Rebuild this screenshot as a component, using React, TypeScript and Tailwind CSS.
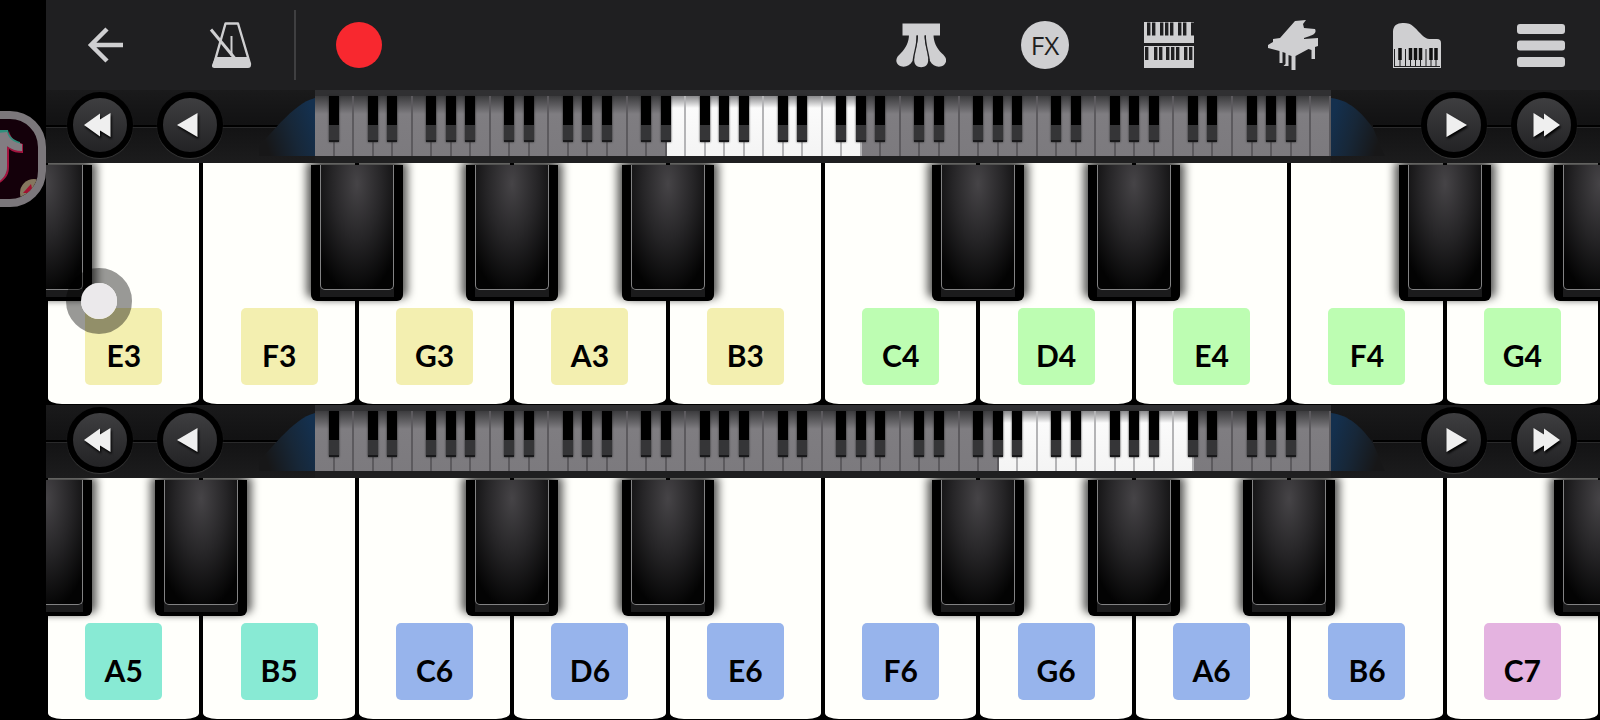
import type { ReactNode } from 'react';
import clsx from 'clsx';

interface Note {
  name: string;
  // black key sitting on the left edge of this white key
  sharp: boolean;
}

interface KeyboardProps {
  id: string;
  notes: Note[];
  firstVisible: number;
}

const LETTERS = ['A', 'B', 'C', 'D', 'E', 'F', 'G'];
const NO_SHARP_BEFORE = ['C', 'F'];

const LABEL_COLORS: Record<string, string> = {
  '3': 'bg-[#f3efb0]',
  '4': 'bg-[#bdfdb2]',
  '5': 'bg-[#88ead4]',
  '6': 'bg-[#97b4ec]',
  '7': 'bg-[#e4b3e0]',
};

const toNotes = (names: string[]): Note[] =>
  names.map((name) => ({ name, sharp: !NO_SHARP_BEFORE.includes(name[0]) }));

const UPPER = toNotes(['E3', 'F3', 'G3', 'A3', 'B3', 'C4', 'D4', 'E4', 'F4', 'G4']);
const LOWER = toNotes(['A5', 'B5', 'C6', 'D6', 'E6', 'F6', 'G6', 'A6', 'B6', 'C7']);

function ToolButton({ label, children }: { label: string; children: ReactNode }) {
  return (
    <button type="button" aria-label={label} className="size-[50px] flex-none text-[#cfcfd1]">
      {children}
    </button>
  );
}

function MiniBlacks({ xs, y }: { xs: number[]; y: number }) {
  return (
    <>
      {xs.map((x) => (
        <rect key={x} x={x} y={y} width="3.4" height="13" fill="#1f1f21" />
      ))}
    </>
  );
}

function Toolbar() {
  return (
    <header className="flex h-[90px] items-center justify-between bg-[#1f1f21] px-[34px]">
      <div className="flex items-center">
        <ToolButton label="Back">
          <svg viewBox="0 0 50 50" fill="none" stroke="currentColor" strokeWidth="4.5">
            <path d="M43 25H11M27 9L11 25l16 16" />
          </svg>
        </ToolButton>
        <div className="w-[76px]" />
        <ToolButton label="Metronome">
          <svg viewBox="0 0 50 50" fill="none" stroke="currentColor" strokeWidth="2.4">
            <path d="M19.500 3.500h12.500l12 40.500H8z" strokeLinejoin="round" />
            <path d="M9.500 37h33l2.500 8q0 3-3 3H8.500q-3 0-2.500-3z" fill="currentColor" stroke="none" />
            <path d="M25.500 16v20" strokeWidth="2" />
            <path d="M5 9.500L28.500 38" strokeWidth="3" />
          </svg>
        </ToolButton>
        <div className="w-[38px]" />
        <div className="h-[70px] w-[2px] bg-[#3f3f41]" />
        <div className="w-[38px]" />
        <ToolButton label="Record">
          <svg viewBox="0 0 50 50">
            <circle cx="25" cy="25" r="23" fill="#f8282f" />
          </svg>
        </ToolButton>
      </div>
      <div className="flex items-center gap-[74px]">
        <ToolButton label="Pedals">
          <svg viewBox="0 0 50 50" fill="currentColor">
            <path d="M6.500 3.500h37.500v12H6.500z" />
            <path d="M13 14h7.500c0 10 0 20-4 27-3 6-10 7-14 4-4-4-2-8 2-11.500C10 28 13 22 13 14z" />
            <path d="M37.500 14H30c0 10 0 20 4 27 3 6 10 7 14 4 4-4 2-8-2-11.500C40.500 28 37.500 22 37.500 14z" />
            <path d="M22 14h6.500c0 10 3.700 18 3.700 26 0 5-3 7.200-7 7.200s-7-2.200-7-7.200c0-8 3.800-16 3.800-26z" />
            <path
              d="M21.200 15.500c.3 9-3 16-4 25M29.300 15.500c-.3 9 3 16 4 25"
              fill="none"
              stroke="#1f1f21"
              strokeWidth="1.300"
            />
          </svg>
        </ToolButton>
        <ToolButton label="Effects">
          <span className="mx-auto flex size-12 items-center justify-center rounded-full bg-[#cfcfd1] font-['Open_Sans'] text-[26px] text-[#1f1f21]">
            FX
          </span>
        </ToolButton>
        <ToolButton label="Keyboard layout">
          <svg viewBox="0 0 50 50" fill="currentColor">
            <path d="M0 2h50v21H0zM0 26h50v22H0z" />
            <MiniBlacks xs={[3, 8, 16, 21, 26, 34, 39, 47]} y={2.5} />
            <MiniBlacks xs={[1, 10, 15, 22, 27, 32, 40, 45]} y={27} />
          </svg>
        </ToolButton>
        <ToolButton label="Instrument">
          <svg viewBox="0 0 50 50" fill="currentColor">
            <path d="M27 1l11-1-3 4 1 4 11 1c2 4-2 6-5 7l-6 2v1l14-1v8l-3 1v12h-3.500V30l-3-1-13 7v14h-4V36l-3-1v11h-5l2-2V33l-3-1v11h-3V31L0 28v-3l5-3v-3l7-1z" />
          </svg>
        </ToolButton>
        <ToolButton label="Piano">
          <svg viewBox="0 0 50 50" fill="currentColor">
            <path d="M1 48V12C1 5 6 2.500 12 3c8 0 11 5 16 10 4 4 6 6 11 6h6q4 0 4 4v25z" />
            <path
              d="M2.500 29v17.500M8 40v6M13.500 29v17M18.500 40v6M23.500 40v6M28.500 40v6M34 29v17M39 40v6M44 40v6M2 46.500h46"
              stroke="#1f1f21"
              strokeWidth="1"
            />
            <path d="M8 28v12M18.500 28v12M23.500 28v12M28.500 28v12M39 28v12M44 28v12" stroke="#111" strokeWidth="3.500" />
          </svg>
        </ToolButton>
        <ToolButton label="Menu">
          <svg viewBox="0 0 50 50" fill="currentColor">
            <rect x="1" y="4" width="48" height="10" rx="3" />
            <rect x="1" y="20.500" width="48" height="10" rx="3" />
            <rect x="1" y="37" width="48" height="10" rx="3" />
          </svg>
        </ToolButton>
      </div>
    </header>
  );
}

function RoundButton({ label, double, flip }: { label: string; double?: boolean; flip?: boolean }) {
  return (
    <button
      type="button"
      aria-label={label}
      className="size-[66px] rounded-full border-[6px] border-black bg-linear-to-b from-[#3e3e40] to-[#232325] shadow-[0_1px_1px_#3a3a3a]"
    >
      <svg viewBox="0 0 54 54" className="size-full drop-shadow-[1px_2px_1px_#000]">
        <g transform={flip ? 'translate(54 0) scale(-1 1)' : undefined}>
          {double ? (
            <path d="M11 27L27 15.500v6L37.500 15v24L27 32.500v6z" fill="#efefef" />
          ) : (
            <path d="M14 27l20.500-12v24z" fill="#efefef" />
          )}
        </g>
      </svg>
    </button>
  );
}

// the 52 white keys from A0 to C8, with the keys on screen lit up
function Overview({ firstVisible }: { firstVisible: number }) {
  const keys = Array.from({ length: 52 }, (_, i) => LETTERS[i % 7]);
  return (
    <div className="flex h-[73px] flex-1 flex-col border-b-[7px] border-[#1f1f20] bg-[#303032] pt-[6px]">
      <div className="flex flex-1">
        {keys.map((letter, i) => {
          const lit = i >= firstVisible && i < firstVisible + 10;
          return (
            <div
              key={i}
              className={clsx(
                'relative flex-1 border-r-2 bg-linear-to-b',
                lit
                  ? 'border-[#b4b4b6] from-[#8a8a8c] via-[#fbfbfb] via-20% to-[#f4f4f4]'
                  : 'border-[#5c5a5e] from-[#3c3c3e] via-[#7f7d81] via-30% to-[#7c7a7e]'
              )}
            >
              {i > 0 && !NO_SHARP_BEFORE.includes(letter) && (
                <span className="absolute -left-[6px] top-0 z-10 h-[46px] w-[10px] border-b-2 border-[#18181a] bg-linear-to-b from-black from-65% to-[#353537] to-65% shadow-[0_0_2px_#222]" />
              )}
            </div>
          );
        })}
      </div>
    </div>
  );
}

function SideRail({ id, right }: { id: string; right?: boolean }) {
  return (
    <div className={clsx('relative w-[269px] flex-none', right && 'flex justify-end')}>
      <div
        className={clsx(
          'absolute top-[35px] h-[3px] border-b border-[#2a2a2b] bg-black',
          right ? 'left-[42px] right-0' : 'left-0 right-[37px]'
        )}
      />
      <svg viewBox="0 0 60 66" className={clsx('absolute top-0 h-[66px] w-[60px]', right ? 'left-0' : 'right-0')}>
        <defs>
          <linearGradient id={id} x1="1" x2="0.100" y1="0.400" y2="0.700">
            <stop offset="0" stopColor="#14304e" />
            <stop offset="0.450" stopColor="#172738" />
            <stop offset="1" stopColor="#171718" />
          </linearGradient>
        </defs>
        <g transform={right ? 'translate(60 0) scale(-1 1)' : undefined}>
          {right ? (
            <path d="M60 8C42 10 30 22 18 38L6 66h54z" fill={`url(#${id})`} />
          ) : (
            <path d="M60 8C48 11 38 20 26 32L4 56v10h56z" fill={`url(#${id})`} />
          )}
        </g>
      </svg>
      <div className={clsx('relative flex h-[68px] items-center gap-6 pt-[2px]', right ? 'pr-[23px]' : 'pl-[21px]')}>
        {right ? (
          <>
            <RoundButton label="Next key" flip />
            <RoundButton label="Next octave" double flip />
          </>
        ) : (
          <>
            <RoundButton label="Previous octave" double />
            <RoundButton label="Previous key" />
          </>
        )}
      </div>
    </div>
  );
}

function BlackKey({ side }: { side: 'left' | 'right' }) {
  return (
    <button
      type="button"
      aria-label="Black key"
      className={clsx(
        'absolute top-[2px] z-10 h-[136px] w-[92px] rounded-b-md border-x-[9px] border-t-0 border-b-4 border-black bg-[#1b1b1c] pb-[7px] shadow-[5px_-3px_8px_rgba(0,0,0,0.6),-5px_-3px_8px_rgba(0,0,0,0.6)]',
        side === 'left' ? '-left-[46px]' : '-right-[46px]'
      )}
    >
      <span className="block h-full rounded-b-[5px] border border-t-0 border-[#828283] bg-[radial-gradient(ellipse_70%_90%_at_50%_15%,#464447_0%,#262527_50%,#030303_100%)]" />
    </button>
  );
}

function Keyboard({ id, notes, firstVisible }: KeyboardProps) {
  return (
    <section>
      <div className="flex h-[73px] bg-linear-to-b from-[#1a1a1b] via-[#121213] via-45% to-[#1c1c1d]">
        <SideRail id={`${id}-left`} />
        <Overview firstVisible={firstVisible} />
        <SideRail id={`${id}-right`} right />
      </div>
      <div className="flex h-[242px] overflow-hidden bg-black">
        {notes.map((note, i) => (
          <div key={note.name} className="relative flex-1 px-[2px] pb-px">
            <button
              type="button"
              className="flex h-full w-full flex-col items-center justify-end bg-[#fffffb] pb-[19px] [border-radius:0_0_14px_14px/0_0_6px_6px]"
            >
              <span
                className={clsx(
                  'flex size-[77px] items-center justify-center rounded-[5px] pt-[18px] text-[30px] font-bold text-black',
                  LABEL_COLORS[note.name[1]]
                )}
              >
                {note.name}
              </span>
            </button>
            {note.sharp && <BlackKey side="left" />}
            {i === notes.length - 1 && <BlackKey side="right" />}
          </div>
        ))}
      </div>
    </section>
  );
}

function FloatingApp() {
  return (
    <div className="absolute -left-[50px] top-[111px] h-24 w-24 overflow-hidden rounded-[36px] border-8 border-[#7b777b] bg-[#14000a]">
      <svg viewBox="0 0 80 80" className="size-full">
        <path d="M51 12c2 8 7 11 14 13v9c-6 0-10-1-14-4v18c0 9-5 15-16 19z" fill="#a31540" />
        <path d="M40 11h10c1 7 6 10 12 12v8c-6 0-10-2-13-4v20c0 9-5 14-14 18z" fill="#2f8f7c" />
        <path d="M49 13c2 8 7 10 15 12v7c-6 0-11-2-15-5v20c0 8-4 13-9 16V14z" fill="#827d82" />
        <circle cx="76" cy="74" r="14" fill="#85775f" />
        <path d="M65 74l8-9 2 9z" fill="#a31030" />
      </svg>
    </div>
  );
}

export default function App() {
  return (
    <div className="relative flex min-h-screen overflow-hidden bg-black font-['Lato','Liberation_Sans',sans-serif]">
      <aside className="relative w-[46px] flex-none">
        <FloatingApp />
      </aside>
      <main className="min-w-0 flex-1">
        <Toolbar />
        <Keyboard id="upper" notes={UPPER} firstVisible={18} />
        <Keyboard id="lower" notes={LOWER} firstVisible={35} />
      </main>
      {/* touch pointer */}
      <div className="pointer-events-none absolute left-[66px] top-[268px] z-20 size-[66px] rounded-full border-[15px] border-black/40">
        <div className="size-full rounded-full bg-[#ebe9eb]" />
      </div>
    </div>
  );
}
